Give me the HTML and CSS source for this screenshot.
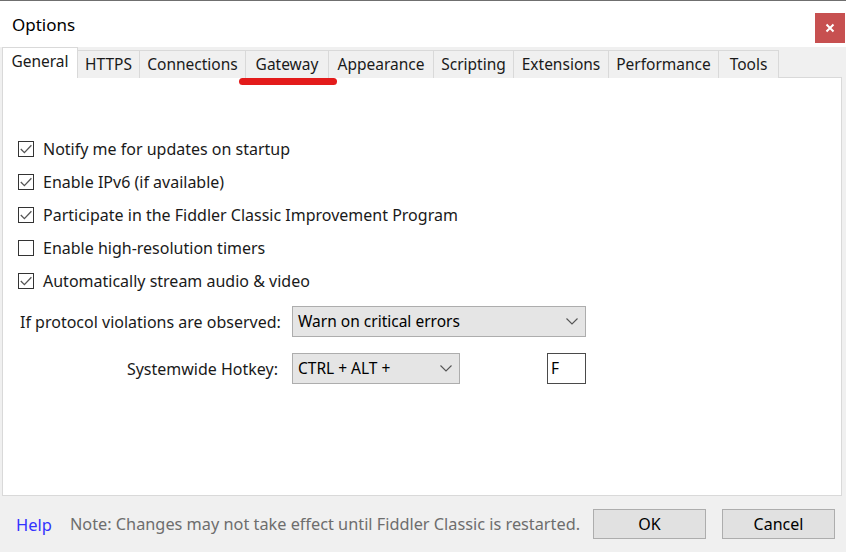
FILE: index.html
```html
<!DOCTYPE html>
<html lang="en">

<head>
  <meta charset="UTF-8" />
  <meta name="viewport" content="width=device-width, initial-scale=1.0" />
  <title>Options</title>
  <link rel="stylesheet" href="styles.css">
</head>

<body>
  <div class="window">
    <div class="titlebar">
      <span class="title">Options</span>
      <button class="close" type="button">
        <svg width="10" height="10" viewBox="0 0 10 10">
          <path d="M1.5 1.5 L8.5 8.5 M8.5 1.5 L1.5 8.5" stroke="#fff" stroke-width="2" />
        </svg>
      </button>
    </div>

    <div class="tabs">
      <div class="tab active">General</div>
      <div class="tab">HTTPS</div>
      <div class="tab">Connections</div>
      <div class="tab">Gateway</div>
      <div class="tab">Appearance</div>
      <div class="tab">Scripting</div>
      <div class="tab">Extensions</div>
      <div class="tab">Performance</div>
      <div class="tab">Tools</div>
      <span class="marker"></span>
    </div>

    <div class="panel">
      <div class="checks">
        <label class="check"><span class="box on"></span>Notify me for updates on startup</label>
        <label class="check"><span class="box on"></span>Enable IPv6 (if available)</label>
        <label class="check"><span class="box on"></span>Participate in the Fiddler Classic Improvement Program</label>
        <label class="check"><span class="box"></span>Enable high-resolution timers</label>
        <label class="check"><span class="box on"></span>Automatically stream audio &amp; video</label>
      </div>

      <div class="fields">
        <span class="field-label">If protocol violations are observed:</span>
        <div class="select wide">Warn on critical errors</div>

        <span class="field-label right">Systemwide Hotkey:</span>
        <div class="hotkey">
          <div class="select short">CTRL + ALT +</div>
          <div class="keybox">F</div>
        </div>
      </div>
    </div>

    <div class="footer">
      <a href="#" class="help">Help</a>
      <span class="note">Note: Changes may not take effect until Fiddler Classic is restarted.</span>
      <div class="buttons">
        <button type="button" class="btn">OK</button>
        <button type="button" class="btn">Cancel</button>
      </div>
    </div>
  </div>
</body>

</html>
```

FILE: styles.css
```css
* {
  margin: 0;
  padding: 0;
  box-sizing: border-box;
  font-family: 'Noto Sans', 'Open Sans', sans-serif;
}

body {
  width: 846px;
  height: 552px;
  overflow: hidden;
  background: #f0f0f0;
}

.window {
  height: 552px;
  display: flex;
  flex-direction: column;
  border-top: 1px solid #6f6f6f;
}

.titlebar {
  height: 46px;
  background: #fff;
  display: flex;
  align-items: flex-start;
  justify-content: space-between;
}

.title {
  font-size: 17px;
  color: #000;
  margin: 12px 0 0 12px;
  line-height: 24px;
}

.close {
  width: 30px;
  height: 30px;
  margin: 12px 1px 0 0;
  border: none;
  background: #c75050;
  display: flex;
  align-items: center;
  justify-content: center;
}

.tabs {
  position: relative;
  display: flex;
  align-items: flex-end;
  height: 31px;
  padding-left: 2px;
  margin-bottom: -1px;
  z-index: 1;
}

.tab {
  height: 28px;
  padding: 0 4px;
  font-size: 15.5px;
  line-height: 26px;
  color: #1a1a1a;
  background: #f0f0f0;
  border: 1px solid #d9d9d9;
  border-bottom: none;
  margin-left: -1px;
  text-align: center;
  white-space: nowrap;
}

.tab:nth-child(1) { width: 76px; }
.tab:nth-child(2) { width: 63px; }
.tab:nth-child(3) { width: 107px; }
.tab:nth-child(4) { width: 84px; }
.tab:nth-child(5) { width: 106px; }
.tab:nth-child(6) { width: 81px; }
.tab:nth-child(7) { width: 96px; }
.tab:nth-child(8) { width: 111px; }
.tab:nth-child(9) { width: 61px; }

.tab.active {
  height: 31px;
  margin-left: 0;
  background: #fff;
  line-height: 27px;
  position: relative;
  z-index: 2;
}

.marker {
  position: absolute;
  left: 239px;
  top: 31px;
  width: 98px;
  height: 7px;
  border-radius: 4px;
  background: #e31b1b;
  z-index: 3;
}

.panel {
  height: 419px;
  margin: 0 4px 0 2px;
  background: #fff;
  border: 1px solid #d9d9d9;
  padding: 63px 0 0 15px;
}

.checks {
  display: flex;
  flex-direction: column;
  gap: 17px;
}

.check {
  display: flex;
  align-items: center;
  gap: 9px;
  height: 16px;
  font-size: 16px;
  color: #1a1a1a;
}

.box {
  width: 16px;
  height: 16px;
  border: 1px solid #333;
  background: #fff;
  flex-shrink: 0;
}

.box.on {
  background: #fff url("data:image/svg+xml,%3Csvg xmlns='http://www.w3.org/2000/svg' width='14' height='14'%3E%3Cpath d='M1.8 7 L5.4 10.6 L12.4 3.2' fill='none' stroke='%23555' stroke-width='1.3'/%3E%3C/svg%3E") center no-repeat;
}

.fields {
  display: grid;
  grid-template-columns: 272px auto;
  row-gap: 16px;
  align-items: center;
  margin-top: 17px;
  margin-left: 2px;
}

.field-label {
  font-size: 16px;
  color: #1a1a1a;
  white-space: nowrap;
}

.field-label.right {
  text-align: right;
  padding-right: 14px;
}

.select {
  height: 31px;
  background: #e5e5e5 url("data:image/svg+xml,%3Csvg xmlns='http://www.w3.org/2000/svg' width='12' height='7'%3E%3Cpath d='M0.5 0.5 L6 6 L11.5 0.5' fill='none' stroke='%23555' stroke-width='1.1'/%3E%3C/svg%3E") right 7px center no-repeat;
  border: 1px solid #adadad;
  font-size: 15.5px;
  line-height: 29px;
  padding-left: 5px;
  color: #000;
}

.select.wide {
  width: 294px;
}

.select.short {
  width: 168px;
}

.hotkey {
  display: flex;
  gap: 87px;
}

.keybox {
  width: 39px;
  height: 31px;
  border: 1px solid #4a4a4a;
  background: #fff;
  font-size: 15.5px;
  line-height: 29px;
  padding-left: 3px;
  color: #000;
}

.footer {
  flex: 1;
  display: flex;
  align-items: center;
  padding: 0 11px 0 16px;
}

.help {
  color: #3333ff;
  text-decoration: none;
  font-size: 16.5px;
}

.note {
  margin-left: 18px;
  font-size: 16.3px;
  color: #6d6d6d;
  white-space: nowrap;
}

.buttons {
  margin-left: auto;
  display: flex;
  gap: 16px;
}

.btn {
  width: 113px;
  height: 30px;
  background: #e1e1e1;
  border: 1px solid #adadad;
  font-size: 16px;
  color: #000;
}
```
